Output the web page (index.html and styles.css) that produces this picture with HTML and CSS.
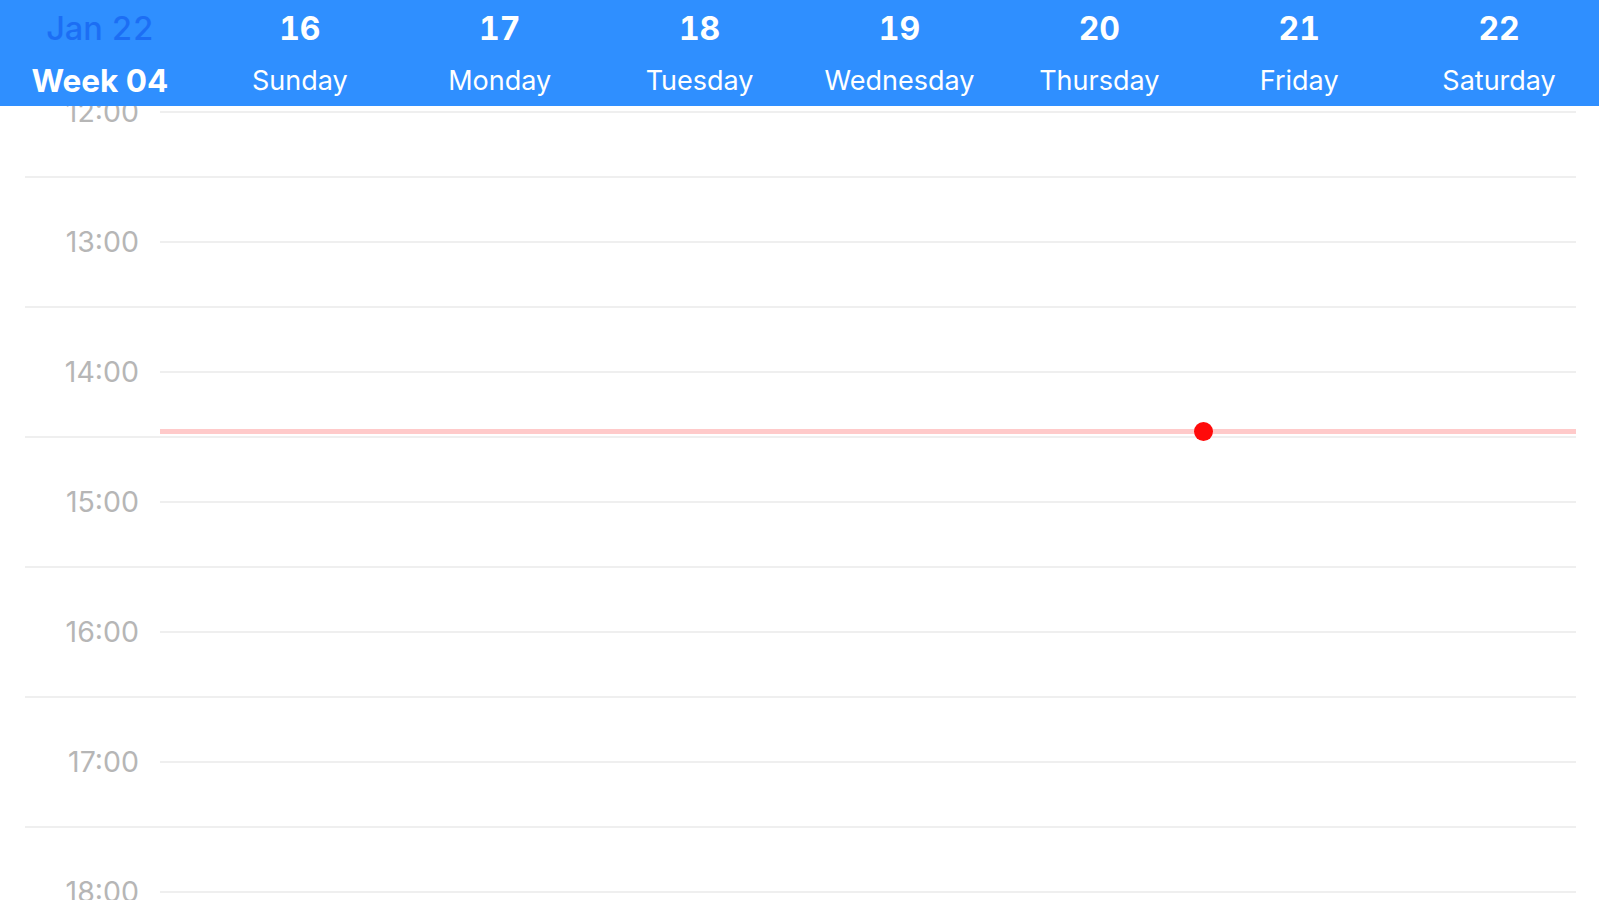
FILE: index.html
```html
<!DOCTYPE html>
<html lang="en">
<head>
  <meta charset="UTF-8" />
  <meta name="viewport" content="width=device-width, initial-scale=1.0" />
  <title>Week 04</title>
  <link rel="stylesheet" href="styles.css">
</head>
<body>
  <header class="week-header">
    <div class="day current">
      <span class="num">Jan 22</span>
      <span class="name">Week 04</span>
    </div>
    <div class="day"><span class="num">16</span><span class="name">Sunday</span></div>
    <div class="day"><span class="num">17</span><span class="name">Monday</span></div>
    <div class="day"><span class="num">18</span><span class="name">Tuesday</span></div>
    <div class="day"><span class="num">19</span><span class="name">Wednesday</span></div>
    <div class="day"><span class="num">20</span><span class="name">Thursday</span></div>
    <div class="day"><span class="num">21</span><span class="name">Friday</span></div>
    <div class="day"><span class="num">22</span><span class="name">Saturday</span></div>
  </header>

  <main class="timeline">
    <div class="hour">
      <div class="hour-top"><span class="label">12:00</span><span class="tick"></span></div>
      <div class="hour-half"></div>
    </div>
    <div class="hour">
      <div class="hour-top"><span class="label">13:00</span><span class="tick"></span></div>
      <div class="hour-half"></div>
    </div>
    <div class="hour">
      <div class="hour-top"><span class="label">14:00</span><span class="tick"></span></div>
      <div class="hour-half"></div>
    </div>
    <div class="hour">
      <div class="hour-top"><span class="label">15:00</span><span class="tick"></span></div>
      <div class="hour-half"></div>
    </div>
    <div class="hour">
      <div class="hour-top"><span class="label">16:00</span><span class="tick"></span></div>
      <div class="hour-half"></div>
    </div>
    <div class="hour">
      <div class="hour-top"><span class="label">17:00</span><span class="tick"></span></div>
      <div class="hour-half"></div>
    </div>
    <div class="hour">
      <div class="hour-top"><span class="label">18:00</span><span class="tick"></span></div>
      <div class="hour-half"></div>
    </div>

    <!-- current time marker -->
    <div class="now-line"><span class="now-dot"></span></div>
  </main>
</body>
</html>
```

FILE: styles.css
```css
* { box-sizing: border-box; }
html, body {
  margin: 0;
  height: 100%;
  overflow: hidden;
}
body {
  font-family: Inter, "Open Sans", sans-serif;
  background-color: white;
}

.week-header {
  display: flex;
  height: 106px;
  background-color: #2f8fff;
  color: white;
}
.day {
  flex: 1;
  display: flex;
  flex-direction: column;
  align-items: center;
  padding-top: 10px;
}
.day .num {
  font-size: 32px;
  font-weight: 700;
  line-height: 38px;
  font-variant-numeric: tabular-nums;
}
.day .name {
  font-size: 27px;
  line-height: 34px;
  margin-top: 16px;
}
.day.current .num {
  color: #1c6ef4;
  font-weight: 500;
  font-size: 32.5px;
}
.day.current .name {
  font-weight: 700;
  font-size: 31.5px;
}

.timeline {
  position: relative;
  height: calc(100% - 106px);
  overflow: hidden;
  padding: 5px 23px 0 25px;
}
.hour { height: 130px; }
.hour-top {
  display: flex;
  align-items: flex-start;
  height: 65px;
}
.label {
  width: 135px;
  padding-right: 21px;
  margin-top: -14px;
  text-align: right;
  font-size: 28.5px;
  line-height: 30px;
  color: #b6b6b6;
}
.tick {
  flex: 1;
  border-top: 2px solid #efefef;
}
.hour-half {
  height: 65px;
  border-top: 2px solid #efefef;
}

.now-line {
  position: absolute;
  left: 160px;
  right: 23px;
  top: 323px;
  height: 5px;
  background-color: #ffcaca;
}
.now-dot {
  position: absolute;
  left: 1034px;
  top: -7px;
  width: 19px;
  height: 19px;
  border-radius: 50%;
  background-color: #ff0a0a;
}
```
